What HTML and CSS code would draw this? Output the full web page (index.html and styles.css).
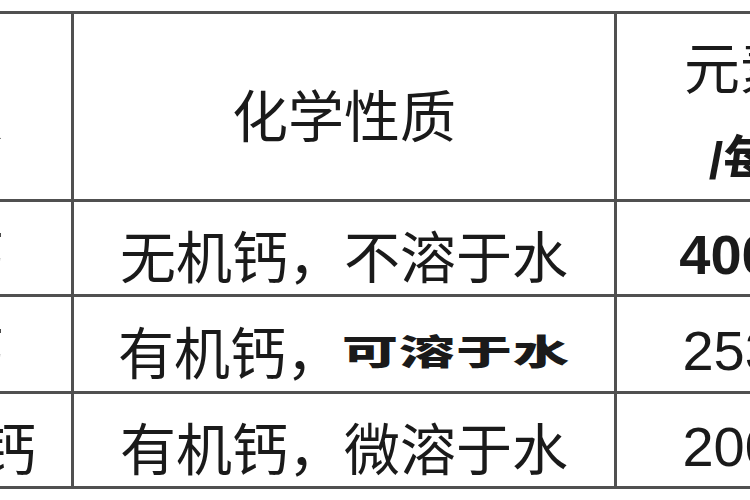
FILE: index.html
```html
<!DOCTYPE html>
<html lang="zh-CN">
<head>
<meta charset="utf-8">
<title>钙剂对比</title>
<link rel="stylesheet" href="styles.css">
</head>
<body>
<div class="page">
  <div class="grid">
    <div class="cell head first">钙种类</div>
    <div class="cell head">化学性质</div>
    <div class="cell head two"><span>元素钙</span><span class="sub">/每克</span></div>

    <div class="cell first">碳酸钙</div>
    <div class="cell">无机钙，不溶于水</div>
    <div class="cell num bold">400mg</div>

    <div class="cell first">乳酸钙</div>
    <div class="cell">有机钙，<span class="heavy">可溶于水</span></div>
    <div class="cell num">253mg</div>

    <div class="cell">柠檬酸钙</div>
    <div class="cell">有机钙，微溶于水</div>
    <div class="cell num">200mg</div>
  </div>
</div>
</body>
</html>
```

FILE: styles.css
```css
html, body {
  margin: 0;
  padding: 0;
  background: #ffffff;
  overflow: hidden;
}

.page {
  width: 750px;
  height: 500px;
  overflow: hidden;
  background: #ffffff;
  padding-top: 11px;
  box-sizing: border-box;
}

.grid {
  display: grid;
  grid-template-columns: 294px 540px 302px;
  grid-template-rows: 185px 92px 94px 92px;
  gap: 3px;
  padding: 3px;
  background: #505050;
  width: max-content;
  margin-left: -226px;
}

.cell {
  background: #ffffff;
  display: flex;
  align-items: center;
  justify-content: center;
  white-space: nowrap;
  font-family: "Noto Sans CJK SC", "Liberation Sans", sans-serif;
  font-size: 56px;
  line-height: 1;
  color: #1a1a1a;
  padding-top: 12px;
  box-sizing: border-box;
}

.first {
  padding-right: 10px;
}

.head {
  padding-top: 12px;
}

.two {
  flex-direction: column;
  line-height: 97px;
}

.sub {
  font-family: "Liberation Sans", "Noto Sans CJK SC", sans-serif;
  font-weight: 700;
  font-size: 52px;
}

.num {
  font-family: "Liberation Sans", sans-serif;
  padding-top: 14px;
}

.bold {
  font-weight: 700;
}

.heavy {
  display: inline-block;
  font-weight: 900;
  transform: scaleY(0.62);
  letter-spacing: 1px;
}
```
